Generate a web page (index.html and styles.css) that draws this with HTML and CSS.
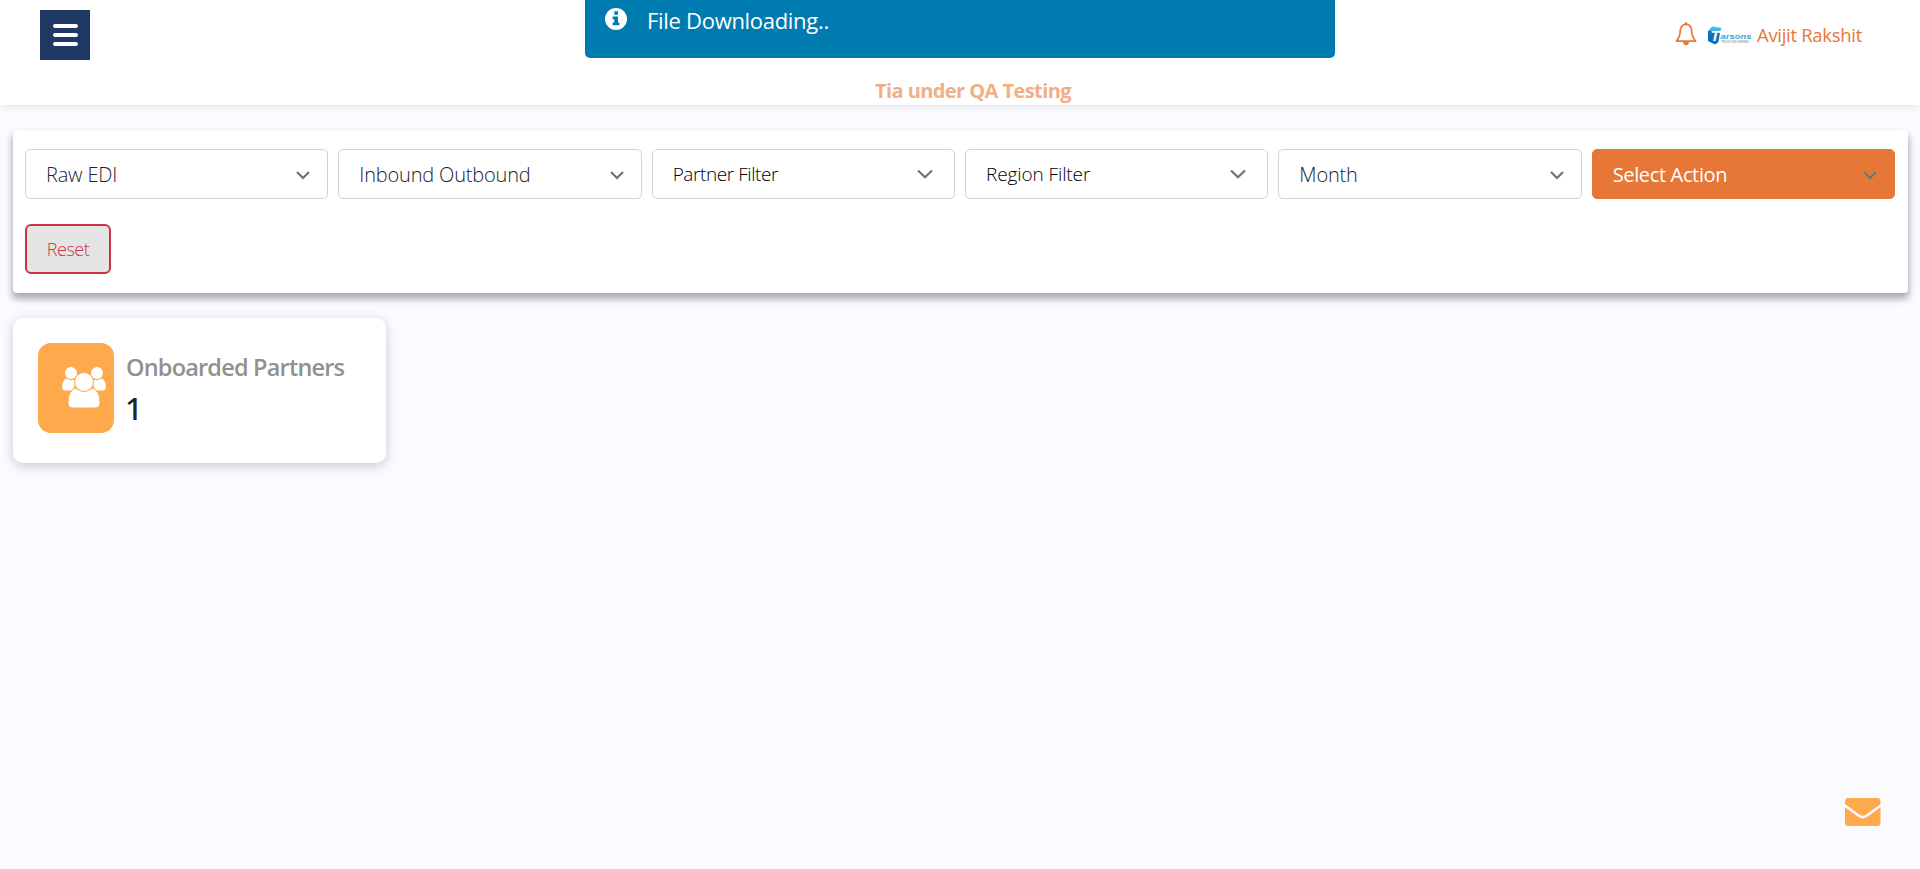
FILE: index.html
```
<!DOCTYPE html>
<html lang="en">
<head>
<meta charset="utf-8">
<title>Dashboard</title>
<link rel="stylesheet" href="styles.css">
</head>
<body>
<header class="topbar">
  <div class="topbar-row">
    <button class="menu-btn" aria-label="Menu"><svg width="26" height="22" viewBox="0 0 26 22"><path d="M3 2h21M3 11h21M3 20h21" stroke="#fff" stroke-width="4" stroke-linecap="round"/></svg></button>
    <div class="user">
      <svg class="bell" width="22" height="24" viewBox="0 0 22 24"><path d="M11 2.200C6.500 2.700 5.300 5.500 5.200 9.500 5.100 14.500 3.500 16.600 1.400 19.100H20.600C18.500 16.600 16.900 14.500 16.800 9.500 16.700 5.500 15.500 2.700 11 2.200Z" fill="none" stroke="#e67737" stroke-width="1.700" stroke-linejoin="round"/><path d="M11 1v1.400" stroke="#e67737" stroke-width="2" stroke-linecap="round"/><path d="M8 19.500h6a3 3.800 0 0 1-6 0Z" fill="#e67737"/></svg>
      <svg class="logo" width="45" height="19" viewBox="0 0 45 19"><path d="M1 5 13.500 3 11.500 16 8 18.500 1 15Z" fill="#0871bd"/><path d="M1 5 5 .5 14.500 2 13 5.500Z" fill="#45b6e8"/><text class="logo-t" x="3.500" y="15">T</text><text class="logo-name" x="13.500" y="12.500" textLength="31" lengthAdjust="spacingAndGlyphs">arsons</text><text class="logo-tag" x="14" y="16.500" textLength="28" lengthAdjust="spacingAndGlyphs">TRUST DELIVERED</text></svg>
      <span class="user-name">Avijit Rakshit</span>
    </div>
  </div>
  <div class="env"><span>Tia under QA Testing</span></div>
</header>
<div class="toast">
  <svg width="22" height="22" viewBox="0 0 22 22"><circle cx="11" cy="11" r="11" fill="#fff"/><path d="M9.300 3.300h3.700v3.500H9.300ZM7.600 8.500H13v6h1.400v2.700H7.600v-2.700h1.600v-3.300H7.600Z" fill="#007bb0"/></svg>
  <span>File Downloading..</span>
</div>
<main class="content">
  <section class="filters">
    <div class="field"><span>Raw EDI</span><svg class="chev" width="16" height="16" viewBox="0 0 16 16"><path d="m2 5 6 6 6-6"/></svg></div>
    <div class="field"><span>Inbound Outbound</span><svg class="chev" width="16" height="16" viewBox="0 0 16 16"><path d="m2 5 6 6 6-6"/></svg></div>
    <div class="field multi partner"><span>Partner Filter</span><svg class="chev" width="18" height="18" viewBox="0 0 18 18"><path d="m2 5.500 7 6.800 7-6.800"/></svg></div>
    <div class="field multi"><span>Region Filter</span><svg class="chev" width="18" height="18" viewBox="0 0 18 18"><path d="m2 5.500 7 6.800 7-6.800"/></svg></div>
    <div class="field"><span>Month</span><svg class="chev" width="16" height="16" viewBox="0 0 16 16"><path d="m2 5 6 6 6-6"/></svg></div>
    <div class="field action"><span>Select Action</span><svg class="chev" width="16" height="16" viewBox="0 0 16 16"><path d="m2 5 6 6 6-6"/></svg></div>
    <button class="reset"><span>Reset</span></button>
  </section>
  <section class="card">
    <div class="card-icon"><svg width="44" height="41" viewBox="0 0 44 41"><g fill="#fff"><circle cx="9" cy="6" r="6"/><circle cx="35" cy="6" r="6"/><path d="M4 11.500q5 3 9 1l-1 9q-2 2-5 2H4Q0 23.500 0 20q0-6 4-8.500ZM40 11.500q-5 3-9 1l1 9q2 2 5 2h3q4 0 4-3.500 0-6-4-8.500Z"/></g><g fill="#fff" stroke="#ffa94d" stroke-width="1"><path d="M13 21q9 6 18 0 7 3 7 15 0 5-5 5H11q-5 0-5-5 0-12 7-15Z"/><circle cx="22" cy="15" r="9.500"/></g></svg></div>
    <div class="card-text"><div class="card-title">Onboarded Partners</div><div class="card-value">1</div></div>
  </section>
</main>
<div class="mail"><svg width="36" height="28" viewBox="0 0 36 28"><rect width="35.500" height="28" rx="3.500" fill="#ffa94d"/><path d="M-1 7 13.500 17.500Q17.750 20.600 22 17.500L36.500 7" fill="none" stroke="#fafbff" stroke-width="2.600"/></svg></div>
</body>
</html>
```
FILE: styles.css
```
* { box-sizing: border-box; }
body { margin: 0; min-height: 869px; background: #fafbff; color: #212529; font-family: "Open Sans", "Noto Sans", sans-serif; font-size: 20px; overflow: hidden; }
button { font-family: inherit; }
.topbar { height: 105px; background: #fff; box-shadow: 0 0 10px rgba(0, 0, 0, .13); padding: 10px 57px 0 40px; }
.topbar-row { display: flex; justify-content: space-between; height: 70px; }
.menu-btn { width: 50px; height: 50px; border: 0; padding: 0; background: #203864; display: flex; align-items: center; justify-content: center; }
.user { display: flex; height: 50px; align-items: center; color: #e67737; font-size: 18.5px; }
.user-name { width: 106px; letter-spacing: -.3px; line-height: 24px; margin-top: -1px; white-space: nowrap; }
.bell { margin-right: 10px; margin-top: -2px; }
.logo { margin-right: 5px; overflow: visible; }
.logo-t { font: italic 900 15px "Liberation Sans", sans-serif; fill: #fff; }
.logo-name { font: italic bold 8px "Liberation Sans", sans-serif; fill: #2cabe2; }
.logo-tag { font: 3.5px "Liberation Sans", sans-serif; fill: #777; }
.env { display: flex; justify-content: center; line-height: 22px; font-weight: 700; letter-spacing: -.57px; color: #f2ae85; padding-left: 43px; }
.toast { position: absolute; left: 585px; top: 0; width: 750px; height: 58px; background: #007bb0; border-radius: 0 0 5px 5px; color: #fff; display: flex; gap: 20px; padding: 8px 20px; font-size: 22px; line-height: 25px; letter-spacing: -.3px; }
.content { padding: 25px 12px 0 13px; display: flex; flex-direction: column; gap: 25px; }
.filters { height: 163px; padding: 19px 13px 0 12px; background: #fff; border-radius: 4px; box-shadow: 0 5px 7px 1px rgba(0, 0, 0, .32); display: grid; grid-template-columns: repeat(6, 1fr); grid-template-rows: 50px 50px; gap: 25px 10px; }
.field { border: 1px solid #ced4da; border-radius: 5px; display: flex; align-items: center; justify-content: space-between; padding: 1px 16px 0 20px; font-weight: 300; letter-spacing: -.18px; }
.chev { fill: none; stroke: #6c757d; stroke-width: 2.2; }
.multi { font-size: 19px; color: #000; padding-right: 20px; padding-top: 0; letter-spacing: -.1px; }
.partner { letter-spacing: -.42px; }
.action { background: #e67737; border-color: #e67737; color: #fff; font-weight: 400; letter-spacing: -.35px; }
.reset { width: 86px; border: 2px solid #cb3443; border-radius: 6px; background: #e4e4e4; color: #cb3443; font-size: 18px; font-weight: 300; letter-spacing: -.5px; }
.card { width: 373px; height: 145px; background: #fff; border-radius: 10px; box-shadow: 0 3px 12px rgba(0, 0, 0, .2); padding: 25px; display: flex; gap: 12px; }
.card-icon { flex: none; width: 76px; height: 90px; border-radius: 13px; background: #ffa94d; padding: 24px 0 0 24px; }
.card-text { padding-top: 7px; }
.card-title { font-size: 23.5px; font-weight: 600; line-height: 34px; letter-spacing: -.8px; color: #919191; white-space: nowrap; }
.card-value { font-family: "Noto Sans", "Open Sans", sans-serif; font-size: 31px; font-weight: 500; line-height: 49px; margin-left: -1px; }
.mail { position: absolute; left: 1845px; top: 798px; line-height: 0; }
```
